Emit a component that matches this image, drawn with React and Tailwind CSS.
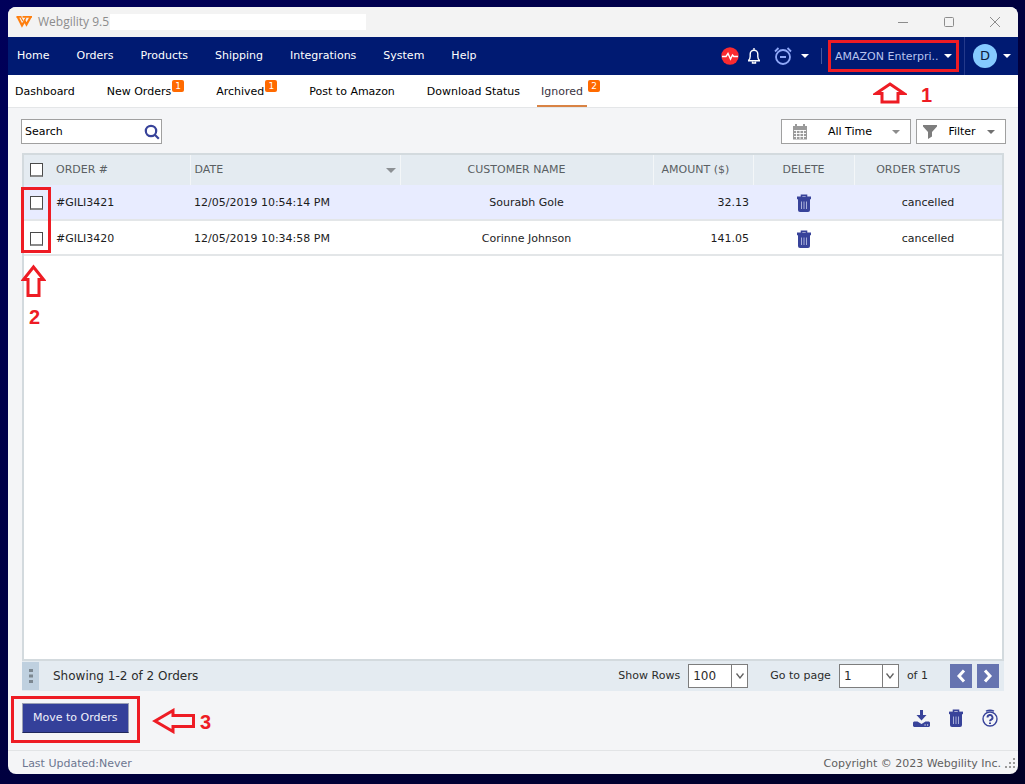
import React, { useState } from 'react';

const menuItems = ['Home', 'Orders', 'Products', 'Shipping', 'Integrations', 'System', 'Help'];

const tabs = [
    { label: 'Dashboard' },
    { label: 'New Orders', count: 1 },
    { label: 'Archived', count: 1 },
    { label: 'Post to Amazon' },
    { label: 'Download Status' }
];

const orders = [
    { id: '#GILI3421', date: '12/05/2019 10:54:14 PM', customer: 'Sourabh Gole', amount: '32.13', status: 'cancelled' },
    { id: '#GILI3420', date: '12/05/2019 10:34:58 PM', customer: 'Corinne Johnson', amount: '141.05', status: 'cancelled' }
];

const Caret = ({ className }) => (
    <svg viewBox="0 0 8 4" className={`h-1 w-2 shrink-0 ${className}`} fill="currentColor" aria-hidden="true">
        <path d="M0 0h8L4 4z" />
    </svg>
);

const Badge = ({ children }) => (
    <span className="mb-3 ml-px flex h-3 w-3 items-center justify-center rounded-xs bg-[#ff6a00] text-[9px] leading-3 text-white">
        {children}
    </span>
);

const TrashIcon = ({ className }) => (
    <svg viewBox="0 0 14 18" className={className} aria-hidden="true">
        <path d="M4.5 3V1.2h5V3" fill="none" stroke="#38439a" strokeWidth="1.6" />
        <path d="M0 2.6h14v2.6H0z" fill="#38439a" />
        <path d="M1 5h12v11a2 2 0 0 1-2 2H3a2 2 0 0 1-2-2z" fill="#38439a" />
        <path d="M4.5 7.5v7.500M7 7.500v7.500M9.500 7.500v7.500" stroke="#b5bbe0" strokeWidth=".9" />
    </svg>
);

const Checkbox = ({ label, checked, onChange }) => (
    <input
        type="checkbox"
        aria-label={label}
        checked={checked}
        onChange={onChange}
        className="block h-[14px] w-[13px] appearance-none border border-b-2 border-[#4a4a4a] border-b-[#8a8a8a] bg-white checked:bg-[#38439a]"
    />
);

// Red outlined arrow
const Arrow = ({ className, d, viewBox }) => (
    <svg viewBox={viewBox} className={`absolute z-10 ${className}`} fill="none" stroke="#ee1c24" strokeWidth="3" aria-hidden="true">
        <path d={d} />
    </svg>
);

const StepNumber = ({ className, children }) => (
    <span className={`absolute z-10 font-['Liberation_Sans',sans-serif] text-xl leading-5 font-bold text-[#ee1c24] ${className}`}>
        {children}
    </span>
);

const TitleBar = () => (
    <header className="flex h-[30px] items-center bg-[#f3f3f3] pl-2">
        <svg viewBox="0 0 16 14" className="h-[14px] w-4" fill="none" stroke="#ff7f0e" aria-hidden="true">
            <path d="M.5 1.800h5M6.500 1.800H16" strokeWidth="1.800" />
            <path d="M1.500 1.500L6 10.500 8.600 6l1.900 3.500L14.600 2" strokeWidth="2.200" />
            <path d="M5 2.500l2 3.500M10 2.500l-1.400 3" strokeWidth="1.200" />
        </svg>
        <h1 className="ml-1.5 font-['Open_Sans',sans-serif] text-xs text-[#8c8c8c]">Webgility 9.5</h1>
        <div className="ml-px h-4 w-64 bg-white" />
        <div className="ml-auto flex text-[#8c8c8c]">
            <button type="button" aria-label="Minimize" className="flex w-[46px] justify-center">
                <svg viewBox="0 0 10 10" className="h-2.5 w-2.5" stroke="currentColor"><path d="M0 5.5h10" /></svg>
            </button>
            <button type="button" aria-label="Maximize" className="flex w-[46px] justify-center">
                <svg viewBox="0 0 10 10" className="h-2.5 w-2.5" fill="none" stroke="currentColor"><rect x=".5" y=".5" width="9" height="9" rx="1" /></svg>
            </button>
            <button type="button" aria-label="Close" className="flex w-[46px] justify-center">
                <svg viewBox="0 0 10 10" className="h-2.5 w-2.5" stroke="currentColor"><path d="M0 0l10 10M10 0L0 10" /></svg>
            </button>
        </div>
    </header>
);

const MenuBar = () => (
    <div className="flex h-[38px] items-center bg-[#001a72] pl-[9px] text-white">
        <nav className="flex gap-[27px]">
            {menuItems.map(item => (
                <a key={item} href="#">{item}</a>
            ))}
        </nav>

        <div className="ml-auto flex h-full items-center">
            <button type="button" aria-label="System health">
                <svg viewBox="0 0 18 18" className="h-[18px] w-[18px]" aria-hidden="true">
                    <circle cx="9" cy="9" r="8.7" fill="#fb2b30" />
                    <path d="M1 9.5h4l2-3 2.5 5.5 2-4 1.3 1.5H17" fill="none" stroke="#fff" strokeWidth="1.4" />
                </svg>
            </button>
            <button type="button" aria-label="Notifications" className="ml-2">
                <svg viewBox="0 0 14 16" className="h-4 w-[14px]" fill="none" stroke="#fff" strokeWidth="1.4" aria-hidden="true">
                    <path d="M7 0v2M1 12.800h12M1.500 12.500c1.500-1.500 1.700-2.500 1.700-4V6a3.800 3.800 0 0 1 7.600 0v2.500c0 1.500.200 2.500 1.700 4" />
                    <path d="M5.500 13.500v1.500h3v-1.500" />
                </svg>
            </button>
            <button type="button" aria-label="Scheduler" className="ml-3 flex items-center gap-2">
                <svg viewBox="0 0 20 20" className="h-5 w-5" fill="none" stroke="#8fa8f8" strokeWidth="1.8" aria-hidden="true">
                    <circle cx="10" cy="11" r="7" />
                    <path d="M7 11h6M2 5.500L5.500 2M18 5.500L14.500 2" />
                </svg>
                <Caret className="text-white" />
            </button>
            <div className="ml-3 h-4 w-px bg-[#4658a0]" />
            <div className="relative ml-1.5 border-[3px] border-[#ee1c24]">
                <select aria-label="Store" className="block h-[26px] w-[125px] appearance-none pt-0.5 pl-1 text-[#b8c4ee]">
                    <option>AMAZON Enterpri..</option>
                </select>
                <Caret className="pointer-events-none absolute top-[11px] right-1 text-white" />
                <Arrow className="top-[39px] left-[42px] h-[22px] w-[34px]" viewBox="0 0 34 22" d="M17 2L31 11.500h-6V20H9v-8.500H3z" />
                <StepNumber className="top-[42px] left-[90px]">1</StepNumber>
            </div>
            <div className="ml-[5px] h-full w-px bg-[#24398a]" />
            <button type="button" aria-label="Account" className="mr-[7px] ml-2 flex items-center gap-1.5">
                <span className="flex h-6 w-6 items-center justify-center rounded-full bg-[#85caff] text-[13px] text-[#0b1c3c]">D</span>
                <Caret className="text-white" />
            </button>
        </div>
    </div>
);

const TabBar = () => (
    <nav className="flex h-[33px] border-b border-[#e4e6e8] bg-white pl-[7px] text-black">
        <div className="flex items-center gap-8 pt-0.5">
            {tabs.map(tab => (
                <a key={tab.label} href="#" className="flex items-center">
                    {tab.label}
                    {tab.count && <Badge>{tab.count}</Badge>}
                </a>
            ))}
        </div>
        <div className="flex px-[17px]">
            <a href="#" aria-current="page" className="flex items-center border-b-2 border-[#d98344] px-1 pt-1 text-[#3a3340]">
                Ignored
            </a>
            <span className="flex items-center pt-0.5"><Badge>2</Badge></span>
        </div>
    </nav>
);

const Toolbar = () => (
    <div className="flex items-center pl-px">
        <div className="flex h-[25px] w-[141px] items-center border border-[#a0a0a0] bg-white pr-px pl-[3px]">
            <input type="text" aria-label="Search" placeholder="Search" className="w-full min-w-0 outline-none placeholder:text-black" />
            <button type="button" aria-label="Search orders">
                <svg viewBox="0 0 16 16" className="h-4 w-4" fill="none" stroke="#38439a" strokeWidth="2.2" aria-hidden="true">
                    <circle cx="7" cy="7" r="5.200" />
                    <path d="M10.800 10.800l4 4" />
                </svg>
            </button>
        </div>

        <button type="button" className="ml-auto flex h-[25px] w-[130px] items-center justify-between border border-[#a0a0a0] bg-white pr-2.5 pl-2.5">
            <svg viewBox="0 0 16 16" className="h-4 w-4" aria-hidden="true">
                <path d="M1 2h14v13.500H1z" fill="#9a9a9a" />
                <path d="M2 6.500h12M2 9.500h12M2 12.500h12M4.500 6v9M8 6v9M11.500 6v9" stroke="#fff" strokeWidth=".9" />
                <path d="M4 0v4M12 0v4" stroke="#9a9a9a" strokeWidth="2" />
            </svg>
            <span>All Time</span>
            <Caret className="text-[#8c8c8c]" />
        </button>
        <button type="button" className="ml-[5px] flex h-[25px] w-[90px] items-center justify-between border border-[#a0a0a0] bg-white pr-2.5 pl-1.5">
            <svg viewBox="0 0 14 14" className="h-[14px] w-[14px]" fill="#7d7d7d" aria-hidden="true">
                <path d="M0 0h14v1.500L9 7v4.500L5 14V7L0 1.500z" />
            </svg>
            <span>Filter</span>
            <Caret className="text-[#707070]" />
        </button>
    </div>
);

const OrdersTable = ({ selected, setSelected }) => {
    const allSelected = selected.length === orders.length;

    const toggle = (id) => {
        setSelected(prev => prev.includes(id) ? prev.filter(x => x !== id) : [...prev, id]);
    };

    return (
        <div className="relative grow border-2 border-[#d3dade] bg-white">
            <table className="w-full table-fixed border-collapse">
                <thead className="bg-[#e4ebf1] text-[#5a5f63]">
                    <tr className="h-[30px] [&>th]:font-normal">
                        <th className="w-7 pl-1.5">
                            <Checkbox
                                label="Select all orders"
                                checked={allSelected}
                                onChange={() => setSelected(allSelected ? [] : orders.map(o => o.id))}
                            />
                        </th>
                        <th className="w-[138px] border-r border-[#f3f6f8] pl-1 text-left">ORDER #</th>
                        <th className="w-[210px] border-r border-[#f3f6f8] px-1 text-left">
                            <span className="flex items-center justify-between">
                                DATE
                                <svg viewBox="0 0 10 5" className="h-[5px] w-2.5" fill="#8c9094" aria-hidden="true">
                                    <path d="M0 0h10L5 5z" />
                                </svg>
                            </span>
                        </th>
                        <th className="border-r border-[#f3f6f8] pr-5 text-center">CUSTOMER NAME</th>
                        <th className="w-[100px] border-r border-[#f3f6f8] pl-2 text-left">AMOUNT ($)</th>
                        <th className="w-[101px] border-r border-[#f3f6f8] text-center">DELETE</th>
                        <th className="w-[148px] pr-5 text-center">ORDER STATUS</th>
                    </tr>
                </thead>
                <tbody className="text-[#1c1c1c]">
                    {orders.map(order => (
                        <tr key={order.id} className="h-[35px] border-b-2 border-[#e3e6e8] odd:bg-[#e8ecff] [&>td]:pt-0.5">
                            <td className="pl-1.5">
                                <Checkbox
                                    label={`Select ${order.id}`}
                                    checked={selected.includes(order.id)}
                                    onChange={() => toggle(order.id)}
                                />
                            </td>
                            <td className="pl-1">{order.id}</td>
                            <td className="pl-1">{order.date}</td>
                            <td className="text-center">{order.customer}</td>
                            <td className="pr-1 text-right">{order.amount}</td>
                            <td>
                                <button type="button" aria-label={`Delete ${order.id}`} className="mx-auto block">
                                    <TrashIcon className="h-[18px] w-[14px]" />
                                </button>
                            </td>
                            <td className="text-center">{order.status}</td>
                        </tr>
                    ))}
                </tbody>
            </table>

            <div className="pointer-events-none absolute top-8 -left-[3px] h-[66px] w-[30px] border-[3px] border-[#ee1c24]" />
            <Arrow className="top-[109px] -left-[3px] h-[34px] w-[25px]" viewBox="0 0 25 34" d="M12.500 3L22.500 15.500H18V31.500H7V15.500H2.500z" />
            <StepNumber className="top-[152px] left-[5px]">2</StepNumber>
        </div>
    );
};

const SelectChevron = () => (
    <span className="pointer-events-none absolute inset-y-0 right-0 flex w-4 items-center justify-center border-l border-[#7d7d7d]">
        <svg viewBox="0 0 8 6" className="h-1.5 w-2" fill="none" stroke="#606060" strokeWidth="1.300" aria-hidden="true">
            <path d="M.5.500L4 5 7.500.500" />
        </svg>
    </span>
);

const Pager = () => (
    <div className="flex h-[30px] items-center bg-[#e4ebf1] text-[#2b2b2b]">
        <div className="flex h-7 w-[17px] items-center justify-center bg-[#bfd0df]">
            <svg viewBox="0 0 4 14" className="h-[14px] w-1" fill="#7c8790" aria-hidden="true">
                <path d="M0 0h4v3H0zM0 5.500h4v3H0zM0 11h4v3H0z" />
            </svg>
        </div>
        <p className="ml-[14px] text-xs">Showing 1-2 of 2 Orders</p>

        <label htmlFor="rows" className="ml-auto">Show Rows</label>
        <div className="relative ml-2 border border-[#7d7d7d] bg-white">
            <select id="rows" className="block h-[22px] w-[58px] appearance-none pl-1 text-xs">
                <option>100</option>
            </select>
            <SelectChevron />
        </div>
        <label htmlFor="page" className="ml-[22px]">Go to page</label>
        <div className="relative ml-2 border border-[#7d7d7d] bg-white">
            <select id="page" className="block h-[22px] w-[58px] appearance-none pl-1 text-xs">
                <option>1</option>
            </select>
            <SelectChevron />
        </div>
        <span className="ml-2">of 1</span>
        <button type="button" aria-label="Previous page" className="ml-[22px] flex h-6 w-[22px] items-center justify-center bg-[#6674b0]">
            <svg viewBox="0 0 10 14" className="h-[14px] w-2.5" fill="none" stroke="#fff" strokeWidth="3"><path d="M8 1.500L3 7l5 5.500" /></svg>
        </button>
        <button type="button" aria-label="Next page" className="mr-[5px] ml-[5px] flex h-6 w-[22px] items-center justify-center bg-[#6674b0]">
            <svg viewBox="0 0 10 14" className="h-[14px] w-2.5" fill="none" stroke="#fff" strokeWidth="3"><path d="M2 1.500L7 7l-5 5.500" /></svg>
        </button>
    </div>
);

const ActionBar = () => (
    <div className="flex items-center">
        <div className="relative">
            <button type="button" className="block h-[30px] border border-[#9aa0b4] border-b-[#20285c] bg-[#34409a] px-2.5 text-[#f0f1fa]">
                Move to Orders
            </button>
            <div className="pointer-events-none absolute -inset-x-[11px] -top-[7px] -bottom-2.5 border-[3px] border-[#ee1c24]" />
            <Arrow className="top-[5px] left-[130px] h-[26px] w-[44px]" viewBox="0 0 44 26" d="M3 13L21 2.500V7.500H41.500V18.500H21V23.500z" />
            <StepNumber className="top-[9px] left-[178px]">3</StepNumber>
        </div>
        <div className="mr-1.5 ml-auto flex items-center gap-[19px]">
            <button type="button" aria-label="Download">
                <svg viewBox="0 0 17 17" className="h-[17px] w-[17px]" fill="#38439a" aria-hidden="true">
                    <path d="M7 0h3v5h3.500l-5 5.500L3.500 5H7z" />
                    <path d="M1 11.500h3.500l4 2.500 4-2.500H16l1 1V16l-1 1H1l-1-1v-3.500z" />
                    <path d="M11.500 15h1.200M14 15h1.200" stroke="#fff" />
                </svg>
            </button>
            <button type="button" aria-label="Delete selected">
                <TrashIcon className="h-[18px] w-[14px]" />
            </button>
            <button type="button" aria-label="Help">
                <svg viewBox="0 0 16 18" className="h-[18px] w-4" fill="none" stroke="#38439a" aria-hidden="true">
                    <circle cx="8" cy="10" r="7" strokeWidth="1.400" />
                    <path d="M4 2.200q4-2 8 0" strokeWidth="1.400" />
                    <path d="M5.500 8.500a2.500 2.500 0 1 1 3.700 2.200c-.9.500-1.200.8-1.200 1.600" strokeWidth="1.900" />
                    <path d="M7 13.500h2v1.500H7z" fill="#38439a" stroke="none" />
                </svg>
            </button>
        </div>
    </div>
);

const App = () => {
    const [selected, setSelected] = useState([]);

    return (
        <div className="flex min-h-screen flex-col bg-[#000042] bg-linear-to-br from-[#00005a] to-[#000026] pt-[7px] pr-[7px] pb-2.5 pl-2 font-['DejaVu_Sans',sans-serif] text-[11px] leading-4">
            <div className="flex grow flex-col overflow-hidden rounded-lg bg-[#f4f5f7]">
                <TitleBar />
                <MenuBar />
                <TabBar />
                <main className="flex grow flex-col px-3 pt-[11px] pb-[17px]">
                    <Toolbar />
                    <div className="mx-0.5 mt-[9px] flex grow flex-col">
                        <OrdersTable selected={selected} setSelected={setSelected} />
                        <Pager />
                    </div>
                    <div className="mx-0.5 mt-3">
                        <ActionBar />
                    </div>
                </main>
                <footer className="flex h-6 items-center border-t border-[#e2e4e6] pt-0.5 pr-0.5 pl-[14px]">
                    <span className="text-[#6c7590]">Last Updated:Never</span>
                    <span className="ml-auto text-[#606060]">Copyright © 2023 Webgility Inc.</span>
                    <svg viewBox="0 0 11 11" className="ml-1 h-[11px] w-[11px]" fill="#9a9a9a" aria-hidden="true">
                        <path d="M8 0h2v2H8zM4 4h2v2H4zM8 4h2v2H8zM0 8h2v2H0zM4 8h2v2H4zM8 8h2v2H8z" />
                    </svg>
                </footer>
            </div>
        </div>
    );
};

export default App;
